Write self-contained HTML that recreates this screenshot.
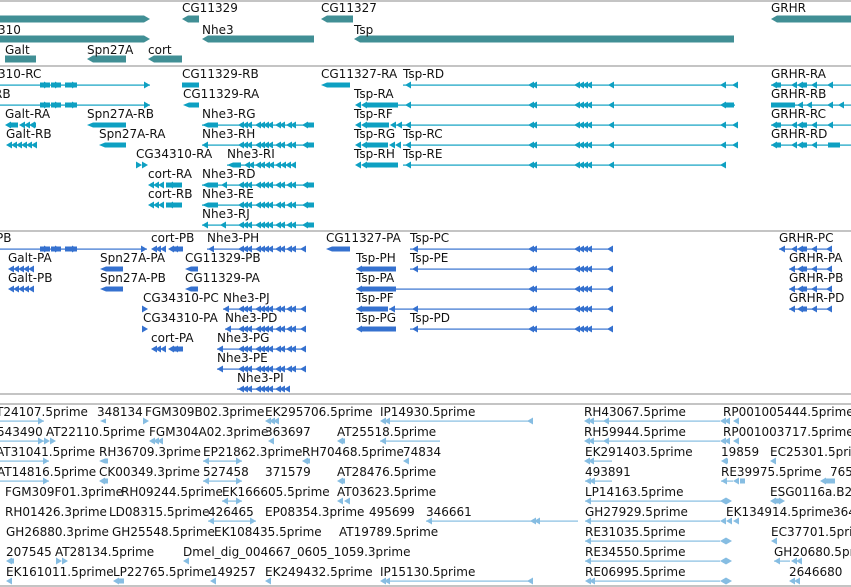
<!DOCTYPE html>
<html><head><meta charset="utf-8">
<style>
html,body{margin:0;padding:0;background:#fff;}
svg{display:block;}
text{font-family:"DejaVu Sans","Liberation Sans",sans-serif;font-size:12px;fill:#111;}
</style></head><body>
<svg id="s" width="851" height="587" viewBox="0 0 851 587" xmlns="http://www.w3.org/2000/svg">
<g stroke="#c4c4c4" stroke-width="2">
<line x1="0" y1="1" x2="851" y2="1"/>
<line x1="0" y1="66" x2="851" y2="66"/>
<line x1="0" y1="231" x2="851" y2="231"/>
<line x1="0" y1="394" x2="851" y2="394"/>
<line x1="0" y1="404" x2="851" y2="404"/>
<line x1="0" y1="586" x2="851" y2="586"/>
</g>
<g id="shapes"></g>
<text x="182" y="12">CG11329</text><text x="321" y="12">CG11327</text><text x="771" y="12">GRHR</text>
<text x="-2" y="34">310</text><text x="202" y="34">Nhe3</text><text x="354" y="34">Tsp</text>
<text x="5" y="54">Galt</text><text x="87" y="54">Spn27A</text><text x="148" y="54">cort</text>
<text x="-2" y="78">310-RC</text><text x="182" y="78">CG11329-RB</text><text x="321" y="78">CG11327-RA</text><text x="403" y="78">Tsp-RD</text><text x="771" y="78">GRHR-RA</text>
<text x="-6" y="98">RB</text><text x="183" y="98">CG11329-RA</text><text x="354" y="98">Tsp-RA</text><text x="771" y="98">GRHR-RB</text>
<text x="5" y="118">Galt-RA</text><text x="87" y="118">Spn27A-RB</text><text x="202" y="118">Nhe3-RG</text><text x="354" y="118">Tsp-RF</text><text x="771" y="118">GRHR-RC</text>
<text x="6" y="138">Galt-RB</text><text x="99" y="138">Spn27A-RA</text><text x="202" y="138">Nhe3-RH</text><text x="354" y="138">Tsp-RG</text><text x="403" y="138">Tsp-RC</text><text x="771" y="138">GRHR-RD</text>
<text x="136" y="158">CG34310-RA</text><text x="227" y="158">Nhe3-RI</text><text x="354" y="158">Tsp-RH</text><text x="403" y="158">Tsp-RE</text>
<text x="148" y="178">cort-RA</text><text x="202" y="178">Nhe3-RD</text>
<text x="148" y="198">cort-RB</text><text x="202" y="198">Nhe3-RE</text>
<text x="202" y="218">Nhe3-RJ</text>
<text x="-4" y="242">PB</text><text x="151" y="242">cort-PB</text><text x="207" y="242">Nhe3-PH</text><text x="326" y="242">CG11327-PA</text><text x="410" y="242">Tsp-PC</text><text x="779" y="242">GRHR-PC</text>
<text x="8" y="262">Galt-PA</text><text x="100" y="262">Spn27A-PA</text><text x="185" y="262">CG11329-PB</text><text x="356" y="262">Tsp-PH</text><text x="410" y="262">Tsp-PE</text><text x="789" y="262">GRHR-PA</text>
<text x="8" y="282">Galt-PB</text><text x="100" y="282">Spn27A-PB</text><text x="185" y="282">CG11329-PA</text><text x="356" y="282">Tsp-PA</text><text x="789" y="282">GRHR-PB</text>
<text x="143" y="302">CG34310-PC</text><text x="223" y="302">Nhe3-PJ</text><text x="356" y="302">Tsp-PF</text><text x="789" y="302">GRHR-PD</text>
<text x="143" y="322">CG34310-PA</text><text x="225" y="322">Nhe3-PD</text><text x="356" y="322">Tsp-PG</text><text x="410" y="322">Tsp-PD</text>
<text x="151" y="342">cort-PA</text><text x="217" y="342">Nhe3-PG</text>
<text x="217" y="362">Nhe3-PE</text>
<text x="237" y="382">Nhe3-PI</text>
<text x="-4" y="416">T24107.5prime</text><text x="97" y="416">348134</text><text x="145" y="416">FGM309B02.3prime</text><text x="265" y="416">EK295706.5prime</text><text x="380" y="416">IP14930.5prime</text><text x="584" y="416">RH43067.5prime</text><text x="723" y="416">RP001005444.5prime</text>
<text x="-3" y="436">543490</text><text x="46" y="436">AT22110.5prime</text><text x="149" y="436">FGM304A02.3prime</text><text x="265" y="436">363697</text><text x="337" y="436">AT25518.5prime</text><text x="584" y="436">RH59944.5prime</text><text x="723" y="436">RP001003717.5prime</text>
<text x="-4" y="456">AT31041.5prime</text><text x="99" y="456">RH36709.3prime</text><text x="203" y="456">EP21862.3prime</text><text x="302" y="456">RH70468.5prime</text><text x="403" y="456">74834</text><text x="585" y="456">EK291403.5prime</text><text x="721" y="456">19859</text><text x="770" y="456">EC25301.5prime</text>
<text x="-3" y="476">AT14816.5prime</text><text x="99" y="476">CK00349.3prime</text><text x="203" y="476">527458</text><text x="265" y="476">371579</text><text x="337" y="476">AT28476.5prime</text><text x="585" y="476">493891</text><text x="721" y="476">RE39975.5prime</text><text x="830" y="476">765</text>
<text x="5" y="496">FGM309F01.3prime</text><text x="121" y="496">RH09244.5prime</text><text x="222" y="496">EK166605.5prime</text><text x="337" y="496">AT03623.5prime</text><text x="585" y="496">LP14163.5prime</text><text x="770" y="496">ESG0116a.B2</text>
<text x="5" y="516">RH01426.3prime</text><text x="109" y="516">LD08315.5prime</text><text x="208" y="516">426465</text><text x="265" y="516">EP08354.3prime</text><text x="369" y="516">495699</text><text x="426" y="516">346661</text><text x="585" y="516">GH27929.5prime</text><text x="726" y="516">EK134914.5prime</text><text x="833" y="516">364</text>
<text x="6" y="536">GH26880.3prime</text><text x="112" y="536">GH25548.5prime</text><text x="214" y="536">EK108435.5prime</text><text x="339" y="536">AT19789.5prime</text><text x="585" y="536">RE31035.5prime</text><text x="771" y="536">EC37701.5prime</text>
<text x="6" y="556">207545</text><text x="55" y="556">AT28134.5prime</text><text x="183" y="556">Dmel_dig_004667_0605_1059.3prime</text><text x="585" y="556">RE34550.5prime</text><text x="774" y="556">GH20680.5prime</text>
<text x="6" y="576">EK161011.5prime</text><text x="113" y="576">LP22765.5prime</text><text x="210" y="576">149257</text><text x="265" y="576">EK249432.5prime</text><text x="380" y="576">IP15130.5prime</text><text x="585" y="576">RE06995.5prime</text><text x="789" y="576">2646680</text>
</svg>
<script>
var G=document.getElementById('shapes'),NS='http://www.w3.org/2000/svg';
function el(t,a){var e=document.createElementNS(NS,t);for(var k in a)e.setAttribute(k,a[k]);G.appendChild(e);}
function row(y,c,spec,h){h=h||5;spec.trim().split(/\s+/).forEach(function(p){var t=p[0],v=p.slice(1).split(',').map(Number);
 if(t=='L')el('rect',{x:v[0],y:y-0.5,width:v[1]-v[0],height:1.2,fill:c});
 else if(t=='B')el('rect',{x:v[0],y:y-h/2,width:v[1]-v[0],height:h,fill:c});
 else if(t=='l')el('polygon',{points:v[0]+','+y+' '+(v[0]+6)+','+(y-3.5)+' '+(v[0]+6)+','+(y+3.5),fill:c});
 else if(t=='r')el('polygon',{points:v[0]+','+y+' '+(v[0]-6)+','+(y-3.5)+' '+(v[0]-6)+','+(y+3.5),fill:c});
 else if(t=='P')el('polygon',{points:v[0]+','+y+' '+(v[0]+6)+','+(y-h/2)+' '+v[1]+','+(y-h/2)+' '+v[1]+','+(y+h/2)+' '+(v[0]+6)+','+(y+h/2),fill:c});
 else if(t=='Q')el('polygon',{points:v[1]+','+y+' '+(v[1]-6)+','+(y-h/2)+' '+v[0]+','+(y-h/2)+' '+v[0]+','+(y+h/2)+' '+(v[1]-6)+','+(y+h/2),fill:c});
});}
var T='#418f95',R='#0ea0c2',P='#3571cf',E='#86bde2';
row(19,T,'Q0,150 P182,199 P321,353 P771,851',7);
row(39,T,'Q0,150 P202,314 P354,734',7);
row(59,T,'B5,36 P87,126 P148,182',7);
var C3='L0,150 B40,50 r50 B51,61 r61 B65,77 r78 r150';
var N='L202,314 l238 l242 l246 l255 l259 l263 l267 l275 l279 l286 l290 l302 B306,314';
var TS='L403,735 l405 l528 l531 l574 l578 l582 l586 l608 l720 l732';
var GR='L771,851 l771 B775,781 l791 l797 B801,807 l811 l827';
row(85,R,C3+' B182,199 P321,350 '+TS+' '+GR);
row(105,R,C3+' P183,199 l355 l361 B367,398 L398,735 l405 l528 l531 l574 l578 l582 l586 l608 l720 B724,734 L771,851 B771,795 l797 l806 l827 l838');
row(125,R,'l5 B9,18 l19 l24 l29 B33,36 P87,126 P202,218 '+N+' l355 l361 B367,389 l390 l396 L396,403 '+TS+' '+GR);
row(145,R,'l6 l11 l16 l21 l26 l31 P99,126 l202 '+N+' l355 l361 B367,388 l389 l395 '+TS+' l771 B775,781 l791 l797 B801,807 l811 B828,840 L771,851');
row(165,R,'r142 r148 P227,241 L227,295 l244 l248 l255 l259 l264 l268 l275 l280 l285 l290 l355 l361 B367,398 L403,726 l405 l528 l531 l574 l578 l582 l586 l608 l720');
row(185,R,'l148 l153 l158 l167 B166,182 P202,218 l221 '+N);
row(205,R,'l148 l153 l158 l167 B166,182 P202,218 '+N);
row(225,R,'l202 l220 '+N);
var NP='l238 l242 l246 l255 l259 l263 l267 l275 l279 l286 l290 l300';
row(249,P,'L0,147 B40,50 r50 B51,61 r61 B65,77 r78 r147 l151 l155 l160 l168 l172 B172,183 L207,306 l208 '+NP+' P326,350 L410,613 l412 l528 l531 l574 l578 l582 l586 l607 L779,831 l779 l791 l797 B801,807 l811 l826');
row(269,P,'l8 l13 l18 l23 l28 P100,123 P185,198 l356 B360,396 L410,613 l412 l528 l531 l574 l578 l582 l586 l607 L789,831 l789 l797 B801,807 l811 l826');
row(289,P,'l8 l13 l18 l23 l28 P100,123 P185,198 l356 B360,396 L396,613 l528 l531 l574 l578 l582 l586 l607 L789,831 l789 l797 B801,807 l811 l826');
row(309,P,'r148 L223,306 l223 '+NP+' l356 B360,388 l389 L389,613 l412 l528 l531 l574 l578 l582 l586 l607 L789,831 l789 l797 B801,807 l811 l826');
row(329,P,'r148 L225,306 l225 '+NP+' l356 B360,396 L410,613 l412 l528 l531 l574 l578 l582 l586 l607');
row(349,P,'l151 l155 l160 l168 l172 B172,183 L217,306 l217 '+NP);
row(369,P,'L217,306 l217 '+NP);
row(389,P,'L237,290 l238 l242 l246 l255 l259 l263 l267 l275 l279 l284');
row(421,E,'L0,44 r44 P100,106 r149 l265 l269 l273 l380 l384 L384,532 l527 l584 l588 L588,720 l603 l720 l724 l733');
row(441,E,'L0,44 r44 r50 r56 l149 l153 l157 l268 l337 B341,345 l380 L380,440 l584 l588 L588,720 l603 l720 l724 l733');
row(461,E,'L0,49 r49 P99,108 l203 L203,242 r242 l302 B306,310 l403 l584 l588 L588,612 l721 B725,728 l770');
row(481,E,'L0,49 r49 l99 B103,108 l203 L203,242 r242 l337 B341,345 l585 L585,612 l589 l721 L721,733 l733 B740,745 l820 B824,835');
row(501,E,'l222 L222,242 r242 l337 l344 l585 L585,722 l720 r732 l770 B774,780 r785');
row(521,E,'l208 L208,256 r256 l426 L426,578 l530 l534 l585 L585,720 l720 l726 l733');
row(541,E,'l585 L585,720 l720 r732 l771');
row(561,E,'l6 B10,14 r62 r68 l183 l585 L585,720 l720 r732 l774 L774,790 l791 l796');
row(581,E,'l6 l113 B117,124 l210 l265 l380 l384 L384,532 l527 l585 l589 L589,720 l720 r732 l789 l794');
</script>
</body></html>
